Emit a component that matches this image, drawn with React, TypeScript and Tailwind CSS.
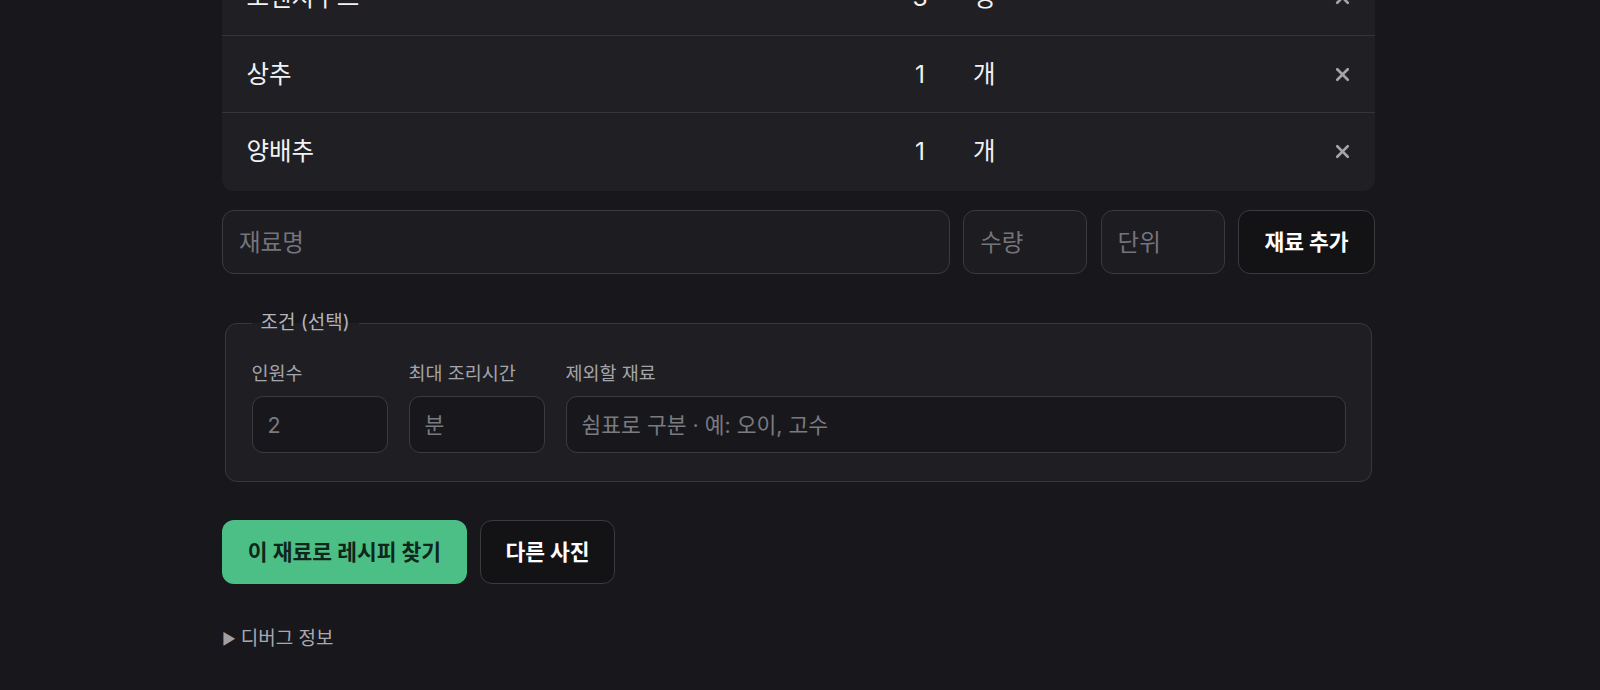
import { X } from "lucide-react";

// ─── Ingredient rows (list is scrolled, first row partly hidden) ────────────
const ITEMS = [
  { name: "오렌지주스", qty: "3", unit: "병" },
  { name: "상추", qty: "1", unit: "개" },
  { name: "양배추", qty: "1", unit: "개" },
];

const FONT = "font-['Inter','Noto_Sans_CJK_KR',sans-serif]";

function IngredientList() {
  return (
    <div className="-mt-[41px] rounded-xl bg-[#202024] overflow-hidden">
      {ITEMS.map((it, i) => (
        <div
          key={it.name}
          className={`flex items-center pl-[24.5px] pr-[22px] text-[24.5px] text-[#f2f2f4] ${
            i === 0 ? "h-[76px]" : i === 1 ? "h-[77px] border-t border-[#34343a]" : "h-[79px] pb-[2px] border-t border-[#34343a]"
          }`}
        >
          <span className="flex-1">{it.name}</span>
          <span className="w-10 text-center">{it.qty}</span>
          <span className="w-[392px] pl-[33px]">{it.unit}</span>
          <button className="text-[#a3a3a8]">
            <X size={21} strokeWidth={3} />
          </button>
        </div>
      ))}
    </div>
  );
}

// ─── Add-ingredient input row ────────────────────────────────────────────────
function AddRow() {
  const input =
    "h-16 rounded-xl border border-[#3a3a40] bg-[#1c1c21] px-4 text-[23.5px] text-white placeholder:text-[#74747b] outline-none";
  return (
    <div className="flex gap-[13.4px] mt-[19px]">
      <input className={`${input} flex-1 min-w-0`} placeholder="재료명" />
      <input className={`${input} w-[124px]`} placeholder="수량" />
      <input className={`${input} w-[124px]`} placeholder="단위" />
      <button className="h-16 w-[137px] rounded-xl border border-[#3a3a40] bg-[#131316] text-[21.5px] font-bold text-white">
        재료 추가
      </button>
    </div>
  );
}

// ─── Optional conditions fieldset ────────────────────────────────────────────
function Field({ label, placeholder, className }: { label: string; placeholder: string; className: string }) {
  const input =
    "h-[57px] w-full rounded-[11px] border border-[#3a3a40] bg-[#18181c] px-[15px] text-[21.5px] text-white placeholder:text-[#7a7a81] outline-none";
  return (
    <label className={`flex flex-col gap-[10px] ${className}`}>
      <span className="text-[18.5px] text-[#a4a4ab] leading-[26px]">{label}</span>
      <input className={input} placeholder={placeholder} />
    </label>
  );
}

function Conditions() {
  return (
    <fieldset className="mt-[35px] mx-[3px] rounded-xl border border-[#37373d] bg-[#1f1f23] px-[25.5px] pt-[23px] pb-[27.5px]">
      <legend className="px-[9px] text-[19px] leading-[28px] text-[#b4b4ba]">조건 (선택)</legend>
      <div className="flex gap-[21px]">
        <Field label="인원수" placeholder="2" className="w-[136px]" />
        <Field label="최대 조리시간" placeholder="분" className="w-[136px]" />
        <Field label="제외할 재료" placeholder="쉼표로 구분 · 예: 오이, 고수" className="flex-1" />
      </div>
    </fieldset>
  );
}

export default function App() {
  return (
    <div className={`min-h-[690px] bg-[#18181c] overflow-hidden ${FONT}`}>
      <div className="ml-[222px] w-[1153px]">
        <IngredientList />
        <AddRow />
        <Conditions />

        <div className="flex gap-[13px] mt-[38.5px]">
          <button className="h-16 w-[245px] rounded-xl bg-[#4cbf87] text-[21.5px] font-bold text-[#10261a]">
            이 재료로 레시피 찾기
          </button>
          <button className="h-16 w-[135px] rounded-xl border border-[#3a3a40] bg-[#131316] text-[21.5px] font-bold text-white">
            다른 사진
          </button>
        </div>

        <details className="mt-[41px]">
          <summary className="list-none flex items-center gap-[5px] text-[19px] leading-[28px] text-[#a8a8ae] cursor-pointer">
            <span className="text-[15px] text-[#a0a0a6]">▶</span>
            디버그 정보
          </summary>
        </details>
      </div>
    </div>
  );
}
